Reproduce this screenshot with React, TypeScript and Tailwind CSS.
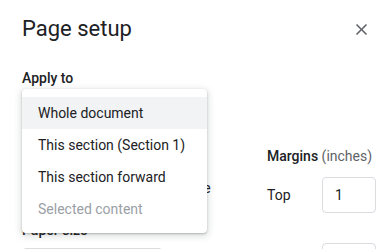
const font = { fontFamily: "Roboto, 'Noto Sans', Arial, sans-serif" };

const MenuItem = ({ label, active, disabled }: { label: string; active?: boolean; disabled?: boolean }) => (
  <div
    className={`h-8 flex items-center pl-4 text-[14px] ${active ? "bg-[#f1f3f4]" : ""} ${
      disabled ? "text-[#9aa0a6]" : "text-[#202124]"
    }`}
  >
    {label}
  </div>
);

const Radio = ({ label, checked }: { label: string; checked?: boolean }) => (
  <label className="flex items-center gap-2 text-[14px] text-[#202124]">
    <span className="w-5 h-5 rounded-full border-2 border-[#5f6368] flex items-center justify-center">
      {checked && <span className="w-2.5 h-2.5 rounded-full bg-[#1a73e8]" />}
    </span>
    {label}
  </label>
);

const MarginRow = ({ label, value }: { label: string; value: string }) => (
  <div className="flex items-center">
    <span className="w-[55px] text-[14px] text-[#202124]">{label}</span>
    <div className="w-[54px] h-9 rounded border border-[#dadce0] flex items-center px-3 text-[14px] text-[#202124]">
      {value}
    </div>
  </div>
);

export default function App() {
  return (
    <div style={font} className="relative w-[389px] h-[249px] overflow-hidden bg-white">
      <div className="pl-[22px] pt-[15px]">
        <div className="flex items-center justify-between pr-[18px]">
          <h1 className="text-[22px] leading-7 text-[#202124]">Page setup</h1>
          <svg width="19" height="19" viewBox="0 0 24 24" fill="#5f6368">
            <path d="M19 6.41L17.59 5 12 10.59 6.41 5 5 6.41 10.59 12 5 17.59 6.41 19 12 13.41 17.59 19 19 17.59 13.41 12z" />
          </svg>
        </div>

        <p className="mt-[25px] text-[14px] leading-5 font-medium text-[#202124]">Apply to</p>
        <div className="mt-1 w-[185px] h-9 rounded border border-[#dadce0] flex items-center px-3 text-[14px] text-[#202124]">
          Whole document
        </div>

        <div className="mt-[19px] flex">
          <div className="w-[245px]">
            <p className="text-[14px] leading-[18px] font-medium text-[#202124]">Orientation</p>
            <div className="mt-[13px] flex items-center gap-[18px]">
              <Radio label="Portrait" checked />
              <Radio label="Landscape" />
            </div>
            <p className="mt-[22px] text-[14px] leading-[18px] font-medium text-[#202124]">Paper size</p>
            <div className="mt-[9px] w-[141px] h-9 rounded border border-[#dadce0]" />
          </div>
          <div>
            <p className="text-[14px] leading-[18px] text-[#202124]">
              <span className="font-medium">Margins</span> <span className="text-[#5f6368]">(inches)</span>
            </p>
            <div className="mt-3 flex flex-col gap-[30px]">
              <MarginRow label="Top" value="1" />
              <MarginRow label="Bottom" value="1" />
            </div>
          </div>
        </div>
      </div>

      <div className="absolute left-[22px] top-[89px] w-[185px] py-2 bg-white rounded shadow-[0_1px_2px_rgba(60,64,67,0.3),0_2px_6px_2px_rgba(60,64,67,0.15)]">
        <MenuItem label="Whole document" active />
        <MenuItem label="This section (Section 1)" />
        <MenuItem label="This section forward" />
        <MenuItem label="Selected content" disabled />
      </div>
    </div>
  );
}
